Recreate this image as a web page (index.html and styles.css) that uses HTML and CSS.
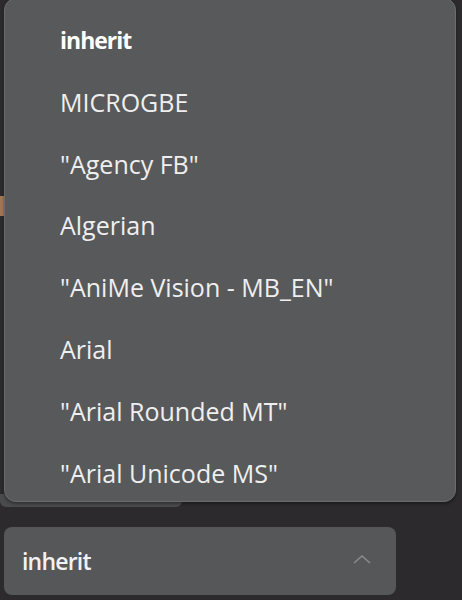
FILE: index.html
```html
<!DOCTYPE html>
<html>
<head>
<meta charset="utf-8">
<link rel="stylesheet" href="styles.css">
</head>
<body>
<div class="page">
  <div class="behind-tab"></div>
  <div class="behind-band"></div>
  <div class="select">
    <span class="select-value">inherit</span>
    <svg class="chevron" width="20" height="12" viewBox="0 0 20 12"><path d="M2 10 L10 3 L18 10" fill="none" stroke="#8a8b8d" stroke-width="1.6"/></svg>
  </div>
  <ul class="menu">
    <li class="item selected">inherit</li>
    <li class="item">MICROGBE</li>
    <li class="item">"Agency FB"</li>
    <li class="item">Algerian</li>
    <li class="item">"AniMe Vision - MB_EN"</li>
    <li class="item">Arial</li>
    <li class="item">"Arial Rounded MT"</li>
    <li class="item">"Arial Unicode MS"</li>
  </ul>
</div>
</body>
</html>
```

FILE: styles.css
```css
html, body {
  margin: 0;
  padding: 0;
  background: #2c2a2c;
  height: 600px;
  overflow: hidden;
}
.page {
  position: relative;
  height: 600px;
  padding: 527px 0 0 4px;
  box-sizing: border-box;
  font-family: "Open Sans", "Noto Sans", sans-serif;
}
.behind-tab {
  position: absolute;
  left: 0;
  top: 196px;
  width: 4px;
  height: 20px;
  background: #a07850;
}
.behind-band {
  position: absolute;
  left: 0;
  top: 494px;
  width: 182px;
  height: 13px;
  border-radius: 0 0 6px 6px;
  background: #4a4b4d;
}
.select {
  width: 392px;
  height: 68px;
  box-sizing: border-box;
  background: #565759;
  border-radius: 8px;
  display: flex;
  align-items: center;
  justify-content: space-between;
  padding: 0 24px 0 18px;
}
.select-value {
  color: #f2f2f2;
  font-size: 23px;
  font-weight: 600;
  letter-spacing: -0.8px;
}
.chevron {
  margin-top: -4px;
}
.menu {
  position: absolute;
  left: 4px;
  top: -2px;
  width: 452px;
  height: 504px;
  box-sizing: border-box;
  margin: 0;
  padding: 11px 0 0 55px;
  list-style: none;
  background: #58595b;
  border: 1px solid #6a6b6d;
  border-radius: 12px;
  overflow: hidden;
  box-shadow: 0 2px 3px rgba(0,0,0,0.35);
}
.item {
  height: 61.8px;
  line-height: 61.8px;
  color: #efefef;
  font-size: 25px;
  font-weight: 500;
  white-space: nowrap;
}
.item.selected {
  font-size: 23px;
  font-weight: 700;
  letter-spacing: -1px;
  color: #ffffff;
}
```
